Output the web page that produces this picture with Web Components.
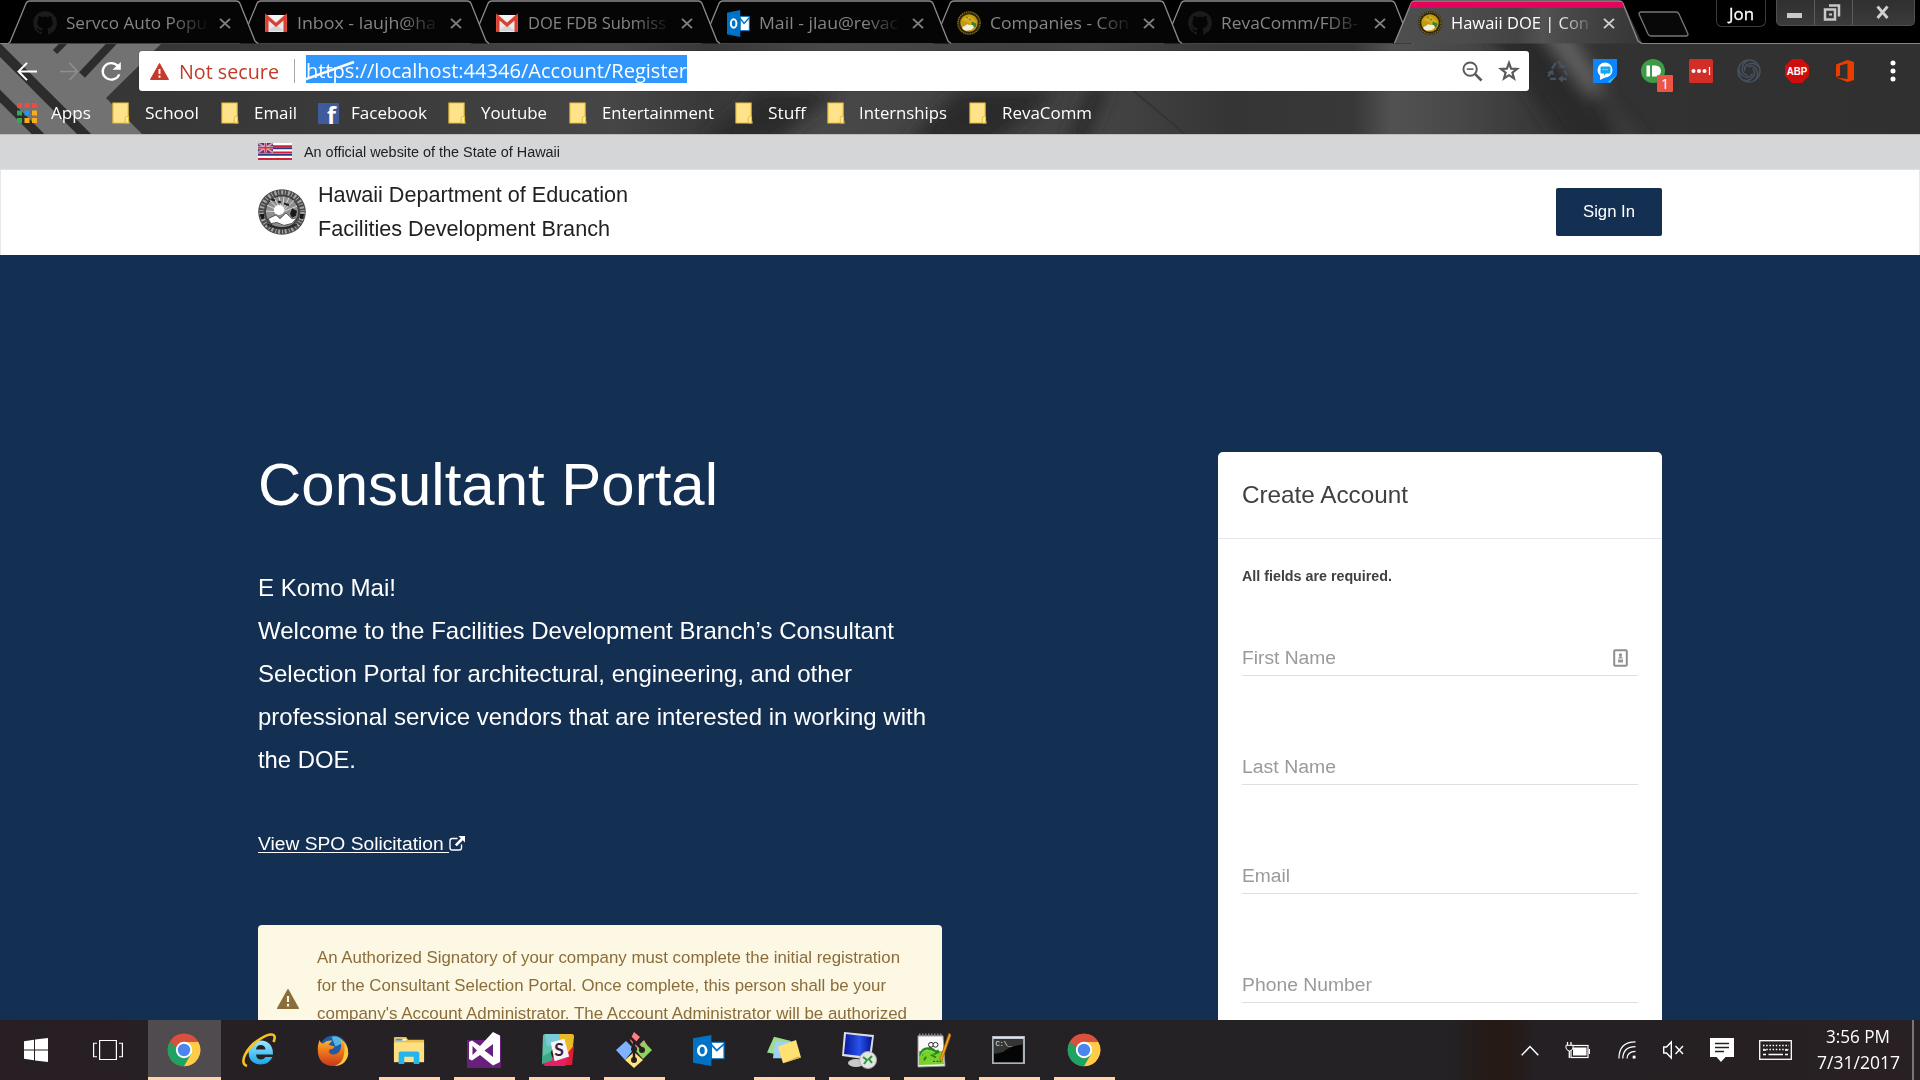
<!DOCTYPE html>
<html lang="en"><head><meta charset="utf-8"><title>Hawaii DOE | Consultant Portal</title>
<style>html,body{margin:0;padding:0;width:1920px;height:1080px;overflow:hidden;background:#132f52}</style></head>
<body><desktop-screen></desktop-screen>
<script>
const define=(name,html,init)=>{
  const t=document.createElement('template');t.innerHTML=html;
  customElements.define(name,class extends HTMLElement{
    connectedCallback(){
      if(this.shadowRoot)return;
      this.attachShadow({mode:'open'}).appendChild(t.content.cloneNode(true));
      if(init)init(this,this.shadowRoot);
    }
  });
};

/* ---------- icons ---------- */
const chromeLogo=`<circle cx="24" cy="24" r="23" fill="#dd5144"/><path d="M4.1 12.5A23 23 0 0 0 24 47L34 30 24 24 14 29.800Z" fill="#1da362"/><path d="M24 47A23 23 0 0 0 44 12.500H24L34 29.700Z" fill="#ffcd46"/><path d="M4.100 12.500A23 23 0 0 1 44 12.500H24L14 29.800Z" fill="#d9503f"/><path d="M4.100 12.500 14 29.800 24 24Z" fill="#1da362"/><path d="M4.100 12.500A23 23 0 0 1 44 12.500H24L13 20Z" fill="#d9503f"/><circle cx="24" cy="24" r="11.500" fill="#fff"/><circle cx="24" cy="24" r="8.800" fill="#4a86ee"/>`;
const github=`<path fill="#1c1a1b" d="M8 0a8 8 0 0 0-2.530 15.590c.4.070.550-.170.550-.380v-1.490c-2.010.370-2.530-.490-2.690-.940-.090-.230-.480-.940-.820-1.130-.280-.150-.680-.520-.010-.530.630-.010 1.080.580 1.230.820.720 1.210 1.870.870 2.330.660.070-.520.280-.870.510-1.070-1.780-.200-3.640-.890-3.640-3.950 0-.870.310-1.590.820-2.150-.080-.200-.360-1.020.080-2.120 0 0 .670-.210 2.200.820a7.600 7.600 0 0 1 4 0c1.530-1.040 2.200-.820 2.200-.820.440 1.100.160 1.920.080 2.120.510.560.820 1.270.820 2.150 0 3.070-1.870 3.750-3.650 3.950.290.250.540.730.540 1.480v2.200c0 .210.150.460.550.380A8 8 0 0 0 8 0Z"/>`;
const folder=`<path d="M1 1H17V17L18 22H1Z" fill="#ffe38a" stroke="#e9bf3a" stroke-width="1.200"/><path d="M14 22V17q0-2 2-2h1.500V22Z" fill="#ffe9a0" stroke="#e6b92c" stroke-width="1"/>`;
const outlook=`<path d="M0 4 19 0V38L0 34Z" fill="#0072c6"/><path d="M19 9H32V29H19Z" fill="#fff" stroke="#0072c6" stroke-width="1.300"/><path d="M19 12l5.500 7L32 11" fill="none" stroke="#0072c6" stroke-width="2"/><ellipse cx="9.500" cy="19" rx="4" ry="6" fill="none" stroke="#fff" stroke-width="2.800"/>`;
const ICONS={
 github:['0 0 16 16',github],
 gmail:['0 0 22 18',`<rect width="22" height="18" rx="1.500" fill="#e9e9e9"/><path d="M3 17 11 10l8 7Z" fill="#d4d4d4"/><path d="M1.800 18V2L11 10.500 20.200 2V18" fill="none" stroke="#d9402f" stroke-width="3.400"/><path d="M4 0H18L11 7Z" fill="#f4f4f4"/>`],
 outlook:['0 0 33 38',outlook],
 seal:['0 0 24 24',`<circle cx="12" cy="12" r="12" fill="#30280d"/><circle cx="12" cy="12" r="11" fill="none" stroke="#8b7420" stroke-width="1.200" stroke-dasharray="1.200 1"/><circle cx="12" cy="12" r="8.700" fill="#c49a10"/><path d="M5 9q4-5 9-3l5 5-3 5-4-4Z" fill="#d5ad20"/><path d="m9 6 2 1M12 8l2 1M15 11l4 2-1 3-3-1Z" fill="#39852b" stroke="#39852b"/><path d="M5 17q1-2 3-2 2-3 4-1 4-1 5 2-2 4-5 3-4 2-7-2Z" fill="#f2f0e2"/>`],
 sealgray:['0 0 48 48',`<circle cx="24" cy="24" r="23.800" fill="#4b4b4b"/><circle cx="24" cy="24" r="20.500" fill="none" stroke="#a6a6a6" stroke-width="4.500" stroke-dasharray="2 1.700 1 2.100"/><circle cx="24" cy="24" r="16.800" fill="#8f8f8f" stroke="#333" stroke-width="1"/><g stroke="#d9d9d9" stroke-width="1"><path d="M24 24 9 17M24 24 12 12M24 24 16 9M24 24 21 8M24 24 26 8M24 24 31 9M24 24 36 12M24 24 39 18M24 24 8 23"/></g><path d="M14 11l3 1M20 13l3 1M26 15l5 2" stroke="#222" stroke-width="2.200"/><circle cx="21" cy="22" r="5.200" fill="#fff"/><path d="M34 20l5 3-1 5-4 2-2-4Z" fill="#191919"/><path d="M10 31l8-4 4 4 6-6 6 6 5-1-5 6-8 2-7-3-6 1Z" fill="#fff" stroke="#555"/><path d="M2 26h4v5H3ZM42 26h4l-1 5h-3Z" fill="#161616"/><path d="M9 37q15 8 30 0" fill="none" stroke="#2a2a2a" stroke-width="2"/>`],
 x:['0 0 12 12','<path d="M1 1 11 11M11 1 1 11" stroke="currentColor" stroke-width="1.900"/>'],
 back:['0 0 20 20','<path d="M20 10H2M10 1 1.500 10 10 19" fill="none" stroke="currentColor" stroke-width="2"/>'],
 fwd:['0 0 20 20','<path d="M0 10H18M10 1 18.500 10 10 19" fill="none" stroke="currentColor" stroke-width="1.800"/>'],
 reload:['0 0 22 22','<path d="M18 5.500A8.600 8.600 0 1 0 19.300 14" fill="none" stroke="#fff" stroke-width="2.300"/><path d="M20.800 1V9.200H12.500Z" fill="#fff"/>'],
 warn:['0 0 20 17','<path d="M10 .5 19.500 16.500H.5Z" fill="currentColor" stroke="currentColor" stroke-linejoin="round"/><path d="M10 6v5M10 12.600v2.200" stroke="var(--mark,#fff)" stroke-width="2"/>'],
 zoomout:['0 0 22 22','<circle cx="8.500" cy="8.500" r="7" fill="none" stroke="#5a5a5a" stroke-width="2"/><path d="M13.500 13.500 20.500 20.500" stroke="#5a5a5a" stroke-width="2.800"/><path d="M5 8.500H12" stroke="#5a5a5a" stroke-width="1.600"/>'],
 star:['0 0 22 22','<path d="M11 3 13.100 8.600 19 8.900 14.400 12.600 16 18.500 11 15.200 6 18.500 7.600 12.600 3 8.900 8.900 8.600Z" fill="none" stroke="#5a5a5a" stroke-width="2.200"/>'],
 recycle:['0 0 24 24','<g fill="none" stroke="#46525f" stroke-width="2.600"><path d="M6.500 9.500 10 3.200"/><path d="M12 2.500h1.500L16 6.500"/><path d="M19.300 11.500 22 16.500"/><path d="M21.500 20.500H17"/><path d="M10.500 20.500H4.500"/><path d="M2.500 18 4.500 14"/></g><path d="M13 8l6 1.500 1-6ZM17.500 16.500v8l-5-4ZM1 13.500l6-2.800 1.500 6Z" fill="#46525f"/>'],
 bubble:['0 0 24 24','<path d="M0 0H24V16L17 24H0Z" fill="#0a84ff"/><path d="M24 16 17 24l-2-1.500Z" fill="#27c4ee"/><circle cx="12" cy="11" r="7.500" fill="#fff"/><path d="M7 15v6l6-3Z" fill="#fff"/><path d="M8.500 7.500h8q1 0 1 1v5q0 1-1 1H13l-2 2v-2H8.500q-1 0-1-1v-5q0-1 1-1Z" fill="#16a7ef"/><path d="M9.500 10.500h6" stroke="#9be0ff" stroke-dasharray="1.200 .8"/>'],
 push:['0 0 24 24','<circle cx="12" cy="12" r="12" fill="#3f9c46"/><path d="M5.500 6.500H9V17.500H5.500ZM11 6.500h3.500a5.500 5.500 0 0 1 0 11H11Z" fill="#fff"/>'],
 lastpass:['0 0 24 24','<rect width="24" height="24" rx="1.500" fill="#d32d27"/><circle cx="4.500" cy="12" r="2" fill="#fff"/><circle cx="10" cy="12" r="2" fill="#fff"/><circle cx="15.500" cy="12" r="2" fill="#fff"/><path d="M20.500 8v8" stroke="#fff" stroke-width="1.200"/>'],
 swirl:['0 0 24 24','<g fill="none" stroke="#46525f" stroke-width="1.500"><circle cx="12" cy="12" r="11"/>'+[0,72,144,216,288].map(a=>`<path transform="rotate(${a} 12 12)" d="M7.500 12Q7 4 16 4.500 20 5 21.500 8"/>`).join('')+'</g>'],
 abp:['0 0 24 24','<path d="M7 0H17L24 7V17L17 24H7L0 17V7Z" fill="#d00d0d"/><text x="12" y="16.300" font-family="Liberation Sans,sans-serif" font-weight="bold" font-size="11.500" textLength="20.500" lengthAdjust="spacingAndGlyphs" text-anchor="middle" fill="#fff">ABP</text>'],
 office:['0 0 18 22','<path d="M0 4.500 11.500 0 18 2V20l-6.500 2L0 17.500l11.500 1.400V3.600L4 5.500V15.500L0 17Z" fill="#eb3c00"/>'],
 dots:['0 0 6 22','<circle cx="3" cy="3" r="2.500" fill="#fff"/><circle cx="3" cy="11" r="2.500" fill="#fff"/><circle cx="3" cy="19" r="2.500" fill="#fff"/>'],
 apps:['0 0 20 20',['#f04b3e','#f04b3e','#f04b3e','#34a853','#2196f3','#fbad18','#34a853','#fbad18','#fbad18'].map((c,i)=>`<rect x="${i%3*7.500}" y="${(i/3|0)*7.500}" width="5" height="5" fill="${c}"/>`).join('')],
 folder:['0 0 19 23',folder],
 fb:['0 0 21 21','<rect width="21" height="21" rx="1" fill="#3f5c9a"/><text x="13.500" y="20.800" font-family="Open Sans,sans-serif" font-weight="bold" font-size="23" text-anchor="middle" fill="#fff">f</text>'],
 flag:['0 0 34 17','<rect width="34" height="17" fill="#fff"/><path d="M0 3.200H34M0 9.500H34M0 16H34" stroke="#cf2034" stroke-width="2.100"/><path d="M0 5.300H34M0 11.700H34" stroke="#2b3a86" stroke-width="2.100"/><rect width="15" height="9.500" fill="#31448d"/><path d="M0 0 15 9.500M15 0 0 9.500" stroke="#d99aae" stroke-width="1.800"/><path d="M7.500 0V9.500M0 4.750H15" stroke="#e9b6c0" stroke-width="3"/><path d="M7.500 0V9.500M0 4.750H15" stroke="#d0304a" stroke-width="1.600"/>'],
 ext:['0 0 16 15','<path d="M8.500 2.500H3.200Q1 2.500 1 4.700V11.800Q1 14 3.200 14H10.300Q12.500 14 12.500 11.800V8.500" fill="none" stroke="#fff" stroke-width="1.400"/><path d="M9.500 0H16V6.500L13.800 4.300 7.800 10.300 5.900 8.400 11.800 2.300Z" fill="#fff"/>'],
 contact:['0 0 15 18','<rect x="1.200" y="1.200" width="12.600" height="15.600" rx="1" fill="#fff" stroke="#8e8e8e" stroke-width="2"/><circle cx="7.500" cy="5.800" r="1.600" fill="#8e8e8e"/><path d="M5 9.500 7.500 6l2.500 3.500ZM5 10.500h5v3H5Z" fill="#999"/>'],
 win:['0 0 24 24','<path d="M0 3.300 10 1.700V11.400H0ZM11 1.600 24 0V11.400H11ZM0 12.600H10V22.300L0 20.800ZM11 12.600H24V24L11 22.400Z" fill="#fff"/>'],
 task:['0 0 30 24','<g fill="none" stroke="#fff" stroke-width="1.200"><path d="M6.600.6H23.400V23.400H6.600ZM4 4H.6V20H4M26 4h3.400V20H26"/></g>'],
 chrome:['0 0 48 48',chromeLogo],
 ie:['0 0 34 34','<defs><linearGradient id="g" x2="0" y2="1"><stop stop-color="#9be8ff"/><stop offset="1" stop-color="#18a6ea"/></linearGradient></defs><path d="M30.500 24Q27 31.500 18.500 31.500 7 31 6.500 19.500 7 8 18.500 7.500 31 8 31 21.500H14Q14.500 26.500 19 26.500 22 26.500 23.500 24ZM14 16.500H23.500Q23 12 18.800 12 14.500 12 14 16.500Z" fill="url(#g)"/><path d="M5 33C-4 30 5 14 18 6 27 0 36-1 31.500 9" fill="none" stroke="#f7c21c" stroke-width="2.600"/>'],
 ff:['0 0 34 34','<defs><linearGradient id="g" x2="0" y2="1"><stop stop-color="#f8c430"/><stop offset=".45" stop-color="#ef7a1c"/><stop offset="1" stop-color="#c8371a"/></linearGradient></defs><circle cx="17" cy="16" r="14.500" fill="#1e5ba8"/><path d="M15 3q8-3 12 6l-8 4Z" fill="#55b6e4"/><path d="M3 6q0 3 3 4 4-4 10-3-3 2-4 4l6 2q-1 3-5 3-2 3 2 5 9 1 10-9 0-6-2-8 10 6 9 17-2 11-14 12Q3 33 1 20 0 11 3 6Z" fill="url(#g)"/><path d="M27 7q8 9 4 18-4 8-13 8 9-3 10-13 1-8-1-13Z" fill="#f9c93c"/>'],
 explorer:['0 0 34 30','<path d="M1 1q0-1 1-1H14l2 3H33V26H1Z" fill="#ebc04e"/><path d="M3 3h11" stroke="#fff" stroke-width="2"/><path d="M3 3h7" stroke="#2b9be0" stroke-width="2"/><path d="M1 6H33V28H1Z" fill="#fedf82"/><path d="M6 30V18q0-2 2-2H26q2 0 2 2V30H22V22H12V30Z" fill="#22b5f0"/>'],
 vs:['0 0 34 36','<path d="M0 8H25V0L34 4V36H0Z" fill="#68217a"/><path d="M26 0 33 3.500V30L26 33.500 13 23 5 28.500 2 27V10L5 8.500 13 14ZM5.500 14v9L10 18.500ZM17.500 18.500 26 25V12Z" fill="#fff" fill-rule="evenodd"/>'],
 slack:['0 0 34 34','<path d="M1 2q0-2 2-2L20 0 8 21 0 33Z" fill="#5bc4aa"/><path d="M3 0H18L20 10 5 13Z" fill="#78cbd7"/><path d="M18 0H31q2 0 2 3l-2 18-8 4-5-16Z" fill="#e9b927"/><path d="M33 12 31 33H22l3-11Z" fill="#df1b35"/><path d="M2 30 13 23h15l-4 11H4Q1 34 2 30Z" fill="#e61e66"/><path d="M0 24v8l11-4-2-9Z" fill="#39aa82"/><path d="M9 9 23 5l5 19-15 5Z" fill="#f6f4f4"/><text x="17.500" y="23.500" font-family="Lato,sans-serif" font-weight="bold" font-size="18" text-anchor="middle" fill="#381f3f">S</text>'],
 git:['0 0 36 36','<path d="M18 0 24 5 19 11 22 14 28 8 31 13 26 18 20 17 14 8Z" fill="#ff7f86"/><path d="M10 9 18 17 9 28 0 18Z" fill="#80b3ff"/><path d="M27 9 36 18 27 27 20 19Z" fill="#8dd35f"/><path d="M18 20 27 28 18 36 9 28Z" fill="#ffe680"/><path d="M10 1 27 18M18 8V28" stroke="#251f22" stroke-width="2.500"/><circle cx="18" cy="17" r="3" fill="#251f22"/><circle cx="18" cy="28" r="3" fill="#251f22"/><circle cx="26" cy="18" r="3" fill="#251f22"/>'],
 sticky:['0 0 34 34','<path d="M7 1 24 6 17 24 0 20Z" fill="#9ddb8d"/><path d="M8 7 26 7 25 27 6 27Z" fill="#9fd1f5"/><path d="M11 13 29 5 34 26 16 33Z" fill="#ffe173"/><path d="M16 33 34 26 31 25Z" fill="#d5b23e"/>'],
 rdp:['0 0 34 36','<defs><linearGradient id="g"><stop stop-color="#0717a2"/><stop offset=".55" stop-color="#2853e8"/><stop offset="1" stop-color="#06148c"/></linearGradient></defs><ellipse cx="14" cy="31" rx="8" ry="4" fill="#c9c9c9"/><path d="M2 0 32 3 29 28 0 24Z" fill="#ddd"/><path d="M4 2 30 5 27 25 2 22Z" fill="url(#g)"/><circle cx="26" cy="28" r="8.500" fill="#e4e4e4" stroke="#aaa"/><path d="M21 25l4 3-3 4M30 24l-3 3 3 4" fill="none" stroke="#259b35" stroke-width="2"/>'],
 npp:['0 0 34 36','<path d="M1 3H26L28 35 1 36Z" fill="#fafafa" stroke="#999"/><path d="M2 2H26" stroke="#888" stroke-width="3" stroke-dasharray="1.500 1.500"/><path d="M2 19H26l1 14L2 34Z" fill="#78cf2d"/><path d="M4 24q1-8 8-7 5 0 6 4l4-2" fill="none" stroke="#2b8216" stroke-width="3.500"/><path d="M4 24q2-6 8-6l6 3" fill="none" stroke="#7be04a" stroke-width="1.500"/><path d="M9 25l-2 4M14 23l5 3M12 18l2-5" fill="none" stroke="#2b8216" stroke-width="2"/><circle cx="14" cy="12.500" r="2.500" fill="#fff" stroke="#222"/><circle cx="18.500" cy="12.500" r="2.500" fill="#fff" stroke="#222"/><path d="M32 0 34 2 25 29 23 31 23 27Z" fill="#f2a01d" stroke="#9d5a0c" stroke-width=".7"/><path d="M16 30h8" stroke="#174b12" stroke-dasharray="2 1.500"/>'],
 cmd:['0 0 34 30','<rect width="34" height="30" fill="#a9b1b8"/><path d="M1 1.800H33" stroke="#dfe4e8" stroke-width="2"/><rect x="1.800" y="3.500" width="30" height="24.700" fill="#050505"/><path d="M2 4H32V9Q17 11 12 17 6 19 2 19Z" fill="#353535"/><text x="3.500" y="11" font-family="Liberation Mono,monospace" font-size="7.500" textLength="17" fill="#eee">C:\\_</text>'],
 caret:['0 0 18 11','<path d="M.7 10.300 9 1.500l8.300 8.800" fill="none" stroke="#fff" stroke-width="1.500"/>'],
 battery:['0 0 24 16','<rect x="5" y="3.500" width="17" height="12" fill="none" stroke="#fff" stroke-width="1.200"/><rect x="7" y="5.500" width="13.500" height="8" fill="#fff"/><path d="M23.300 7v5M1.500 0v3M5 0v3M3.300 8v8" stroke="#fff" stroke-width="1.300"/><path d="M0 3.300h7V6q-1 3-3.500 3T0 6Z" fill="#252023" stroke="#fff"/>'],
 wifi:['0 0 19 19','<g fill="none" stroke="#fff" stroke-width="1.300"><path d="M1 18.500Q1 1 18.500 1"/><path d="M5 18.500Q5.500 6 18.500 6"/><path d="M9.500 18.500Q10 11 18.500 11"/></g><rect x="15.500" y="15.500" width="3" height="3" fill="#fff"/>'],
 mute:['0 0 21 18','<path d="M.7 6H3.500L8.300.9V17.100L3.500 12H.7ZM12.500 5l7.500 8M20 5l-7.500 8" fill="none" stroke="#fff" stroke-width="1.400"/>'],
 msg:['0 0 24 24','<path d="M0 0H24V19H15.500L11 24 6.500 19H0Z" fill="#fff"/><path d="M5 5.500H19M5 9.500H19M5 13.500H14" stroke="#252023" stroke-width="1.300"/>'],
 kbd:['0 0 33 20','<rect x=".7" y=".7" width="31.600" height="18.600" fill="none" stroke="#fff" stroke-width="1.300"/><path d="M4 5.500H30M4 9.500H30" stroke="#fff" stroke-width="1.400" stroke-dasharray="1.500 1.700"/><path d="M4 14.500H7M9.500 14.500H24M26 14.500h3M4 10h3M26 10h3" stroke="#fff" stroke-width="1.300"/>']
};
define('ui-icon','<style>:host{display:block;flex:none}svg{display:block;width:100%;height:100%;overflow:visible}</style>',(h,r)=>{
  const [vb,body]=ICONS[h.getAttribute('name')];
  h.style.width=h.getAttribute('w')+'px';h.style.height=h.getAttribute('h')+'px';
  r.innerHTML+=`<svg viewBox="${vb}" preserveAspectRatio="none">${body}</svg>`;
});

/* One line of text condensed or expanded to a set width */
define('fit-text','<style>:host{display:block;flex:none;white-space:nowrap}span{display:inline-block;transform-origin:0 50%;vertical-align:top;text-decoration:var(--line,none);text-underline-offset:2px;text-decoration-thickness:1px}</style><span><slot></slot></span>',(h,r)=>{
  const s=r.querySelector('span'),w=+h.getAttribute('w');
  h.style.width=w+'px';
  s.style.transform=`scaleX(${w/s.getBoundingClientRect().width})`;
});

/* ---------- browser ---------- */
define('theme-art',`<style>:host{display:block;position:absolute;inset:0;z-index:-1}svg{display:block}</style>
<svg width="1920" height="134"><defs>
<linearGradient id="a"><stop stop-color="#343434"/><stop offset=".2" stop-color="#3b3b3b"/><stop offset=".32" stop-color="#464646"/><stop offset=".37" stop-color="#383838"/><stop offset=".43" stop-color="#484848"/><stop offset=".53" stop-color="#404040"/><stop offset=".57" stop-color="#454545"/><stop offset=".64" stop-color="#353535"/><stop offset=".705" stop-color="#383838"/><stop offset=".725" stop-color="#525252"/><stop offset=".76" stop-color="#484848"/><stop offset=".8" stop-color="#383838"/><stop offset=".84" stop-color="#323232"/><stop offset="1" stop-color="#303030"/></linearGradient>
<filter id="b" filterUnits="userSpaceOnUse" x="0" y="-40" width="1920" height="220"><feGaussianBlur stdDeviation="8"/></filter></defs>
<rect width="1920" height="134" fill="url(#a)"/>
<g filter="url(#b)"><path d="M700 144 760 90 840 90 770 144ZM905 144 960 90 1060 90 990 144Z" fill="#2a2a2a"/><path d="M1065 144 1090 85 1110 85 1085 144Z" fill="#292929"/><path d="M1480 20h50l110 130h-70Z" fill="#292929"/><path d="M1532 20h30l44 70-16 6Z" fill="#606060"/><path d="M1590 80 1650 150h-24Z" fill="#3c3c3c"/></g>
<path d="M1130 88 1185 134" stroke="#343434" stroke-width="2"/>
<path d="M0 44H161L106 98 142 134H0Z" fill="#727272"/>
<g stroke="#2c2c2c" fill="none"><path d="M-6 44 88 138" stroke-width="10"/><path d="M-4 92 42 138" stroke-width="9"/><path d="M114 41 82 75" stroke-width="8"/><path d="M66 41 55 52" stroke-width="6"/></g>
<path d="M0 0H1920V43H1642L1623 2H1413L1393 43H0Z" fill="#000"/><path d="M0 43.500H1393M1642 43.500H1920" stroke="#848484"/></svg>`);
define('browser-tab',`<style>:host{display:flex;position:relative;box-sizing:border-box;width:231px;height:44px;flex:none;padding:2px 0 0 25px;align-items:center;color:#858585}
:host([active]){color:#fff;z-index:20!important;padding-left:24px}
.bg{position:absolute;left:0;top:0;z-index:-1}.ic{width:24px;display:flex;justify-content:center;margin-right:9px}
.t{width:142px;overflow:hidden;font:17px/24px "Open Sans",sans-serif;margin-right:11px;padding-bottom:1px;-webkit-mask:linear-gradient(90deg,#000 74%,transparent 101%)}
:host([active]) .t{margin-right:10px}
ui-icon.x{color:#808080}:host([active]) ui-icon.x{color:#d0d0d0}</style>
<svg class="bg" width="251" height="44"></svg><div class="ic"></div><div class="t"><slot></slot></div><ui-icon class="x" name="x" w="12" h="11"></ui-icon>`,(h,r)=>{
  const on=h.hasAttribute('active'),p='M0,43.500L2,42L18,3.500Q19,1 22,1H228Q231,1 232,3.500L247,41L250,43.500';
  const q=on?'M-1,43.500L1,42L17,3.500Q18,1 21,1H225Q228,1 229,3.500L244,41L248,43.500':p;
  r.querySelector('svg').innerHTML='<defs><linearGradient id="f"><stop stop-color="#4e4e4e"/><stop offset=".3" stop-color="#4c4c4c"/><stop offset=".5" stop-color="#434343"/><stop offset=".6" stop-color="#525252"/><stop offset=".7" stop-color="#484848"/><stop offset="1" stop-color="#363636"/></linearGradient></defs>'+`<path d="${q}" fill="${on?'url(#f)':'#050505'}" stroke="#8b8b8b" stroke-width="1.300"/>`+(on?'<path d="M18 2H228l2 6H15.500Z" fill="#e5045c"/>':'');
  r.querySelector('.ic').innerHTML=`<ui-icon name="${h.getAttribute('icon')}" w="${h.getAttribute('iw')}" h="${h.getAttribute('ih')}"></ui-icon>`;
});
define('tab-strip',`<style>:host{display:flex;height:44px;padding-left:8px;align-items:flex-start}
.new{margin:11px 0 0 13px}.jon{margin:0 0 0 26px;width:48px;height:26px;border:1px solid #3b3b3b;border-top:0;border-radius:0 0 6px 6px;display:flex;justify-content:center;font:17px/27px "Open Sans",sans-serif;color:#fff;-webkit-text-stroke:.3px #fff}
.win{display:flex;margin-left:10px;border:1px solid #4f4f4f;border-top:0;border-radius:0 0 5px 5px;background:linear-gradient(#303030,#3b3b3b);overflow:hidden}
.win svg{display:block;border-right:1px solid #5c5c5c}.win svg:last-child{border:0}</style>
<browser-tab style="z-index:9" icon="github" iw="24" ih="24"><fit-text w="141">Servco Auto Popu</fit-text></browser-tab>
<browser-tab style="z-index:8" icon="gmail" iw="22" ih="17"><fit-text w="139">Inbox - laujh@ha</fit-text></browser-tab>
<browser-tab style="z-index:7" icon="gmail" iw="22" ih="17"><fit-text w="138">DOE FDB Submiss</fit-text></browser-tab>
<browser-tab style="z-index:6" icon="outlook" iw="23" ih="27"><fit-text w="139">Mail - jlau@revac</fit-text></browser-tab>
<browser-tab style="z-index:5" icon="seal" iw="24" ih="24"><fit-text w="139">Companies - Con</fit-text></browser-tab>
<browser-tab style="z-index:4" icon="github" iw="24" ih="24"><fit-text w="137">RevaComm/FDB-</fit-text></browser-tab>
<browser-tab active icon="seal" iw="24" ih="24"><fit-text w="138">Hawaii DOE | Con</fit-text></browser-tab>
<svg class="new" width="52" height="26"><path d="M3 1H38Q40 1 41 3L50 23Q50 25 48 25H13Q11 25 10 23L1 3Q1 1 3 1Z" fill="#080808" stroke="#777" stroke-width="1.300"/></svg>
<div class="jon"><fit-text w="25">Jon</fit-text></div>
<div class="win"><svg width="37" height="25"><path d="M10 15.500H25" stroke="#c9c9c9" stroke-width="5"/></svg><svg width="37" height="25"><path d="M14 5.500h10v11M10 9.500h10v10H10Z" fill="none" stroke="#c9c9c9" stroke-width="2.500"/><path d="M14 14.500h3" stroke="#c9c9c9" stroke-width="2"/></svg><svg width="61" height="25"><path d="M24.500 6.500 34.500 18M34.500 6.500 24.500 18" stroke="#d0d0d0" stroke-width="2.800"/></svg></div>`);
define('omni-bar',`<style>:host{display:flex;height:40px;width:1390px;background:#fff;border-radius:3px;box-sizing:border-box;align-items:center;padding:0 9px 0 11px;font:20px/40px "Open Sans",sans-serif;box-shadow:0 0 1px #111}
.w{color:#c53929;margin-right:9px}.ns{color:#c53929;padding-top:1px}.d{width:1px;height:24px;background:#a9a9a9;margin:0 11px 0 15px}
.sel{position:relative;background:#3297fd;color:#fff;height:28px;line-height:31px;margin-top:-4px}.sel svg{position:absolute;left:0;top:0}.sp{flex:1}.z{margin-right:15px}</style>
<ui-icon class="w" name="warn" w="19" h="17"></ui-icon><fit-text class="ns" w="100" style="margin-left:1px">Not secure</fit-text><div class="d"></div>
<div class="sel"><fit-text w="381">https://localhost:44346/Account/Register</fit-text><svg width="50" height="28"><path d="M0 24 48 7" stroke="#fff" stroke-width="2.500"/></svg></div><div class="sp"></div>
<ui-icon class="z" name="zoomout" w="21" h="21"></ui-icon><ui-icon name="star" w="22" h="22"></ui-icon>`);
define('tool-bar',`<style>:host{display:flex;height:54px;box-sizing:border-box;padding:7px 0 7px 17px;align-items:center;color:#fff}
.b{margin-right:23px}.f{color:#8e8e8e;margin-right:21px}.r{margin-right:17px}.e{margin-left:24px;position:relative}.e b{position:absolute;left:16px;top:16px;width:16px;height:17px;background:#ea5545;color:#fff;font:14px/17px "Open Sans",sans-serif;text-align:center;border-radius:1px}.o{margin-left:27px}.k{margin-left:36px}</style>
<ui-icon class="b" name="back" w="20" h="19"></ui-icon><ui-icon class="f" name="fwd" w="19" h="19"></ui-icon><ui-icon class="r" name="reload" w="22" h="21"></ui-icon><omni-bar></omni-bar>
<ui-icon style="margin-left:17px" name="recycle" w="23" h="22"></ui-icon><div class="e"><ui-icon name="bubble" w="24" h="24"></ui-icon></div><div class="e"><ui-icon name="push" w="24" h="24"></ui-icon><b>1</b></div><div class="e"><ui-icon name="lastpass" w="24" h="24"></ui-icon></div><div class="e"><ui-icon name="swirl" w="24" h="24"></ui-icon></div><div class="e"><ui-icon name="abp" w="24" h="24"></ui-icon></div><ui-icon class="o" name="office" w="18" h="22"></ui-icon><ui-icon class="k" name="dots" w="6" h="22"></ui-icon>`);
const marks=[['apps',20,14,40,'Apps'],['folder',18,15,54,'School'],['folder',18,15,43,'Email'],['fb',21,12,76,'Facebook'],['folder',18,15,66,'Youtube'],['folder',18,15,112,'Entertainment'],['folder',18,15,38,'Stuff'],['folder',18,14,88,'Internships'],['folder',18,15,90,'RevaComm']];
define('bookmark-bar',`<style>:host{display:flex;height:36px;box-sizing:border-box;padding:0 0 6px 17px;align-items:center;gap:21.35px;color:#fff;font:17px/30px "Open Sans",sans-serif}.m{display:flex;align-items:center}fit-text{margin-top:0;padding-bottom:1px}</style>`+marks.map(m=>`<div class="m"><ui-icon name="${m[0]}" w="${m[1]}" h="${m[0]=='folder'?22:m[0]=='fb'?21:20}" style="margin-right:${m[2]}px"></ui-icon><fit-text w="${m[3]}">${m[4]}</fit-text></div>`).join(''));
define('browser-chrome',`<style>:host{display:block;position:relative;height:134px;z-index:0;flex:none}</style><theme-art></theme-art><tab-strip></tab-strip><tool-bar></tool-bar><bookmark-bar></bookmark-bar>`);

/* ---------- page ---------- */
define('official-banner',`<style>:host{display:flex;height:36px;box-sizing:border-box;background:#d5d6d8;border-top:1px solid #bdbdbd;border-bottom:1px solid #e2e2e2;align-items:center;padding:0 0 1px 258px;gap:11.5px;font:14px/34px "Liberation Sans",Arial,sans-serif;color:#212121}fit-text{margin-top:1px}</style><ui-icon name="flag" w="34" h="17"></ui-icon><fit-text w="256">An official website of the State of Hawaii</fit-text>`);
define('site-header',`<style>:host{display:flex;height:85px;box-sizing:border-box;background:#fff;border:1px solid #e8e8ea;border-top:0;border-bottom:0;align-items:center;padding:0 257px 2px;font:22.4px/34px "Liberation Sans",Arial,sans-serif;color:#212121}
.n{margin-left:12px;flex:1}.btn{width:106px;height:48px;border-radius:2px;background:#132f52;color:#fff;display:flex;justify-content:center;font-size:16.500px;line-height:47px}</style>
<ui-icon name="sealgray" w="48" h="46"></ui-icon><div class="n"><fit-text w="310">Hawaii Department of Education</fit-text><fit-text w="292">Facilities Development Branch</fit-text></div><div class="btn"><fit-text w="52">Sign In</fit-text></div>`);
define('alert-box',`<style>:host{display:flex;box-sizing:border-box;width:684px;height:150px;background:#fcf8e3;border-radius:4px;color:#8a6d3b;font:16.800px/28px "Liberation Sans",Arial,sans-serif;padding:19px 0 0 19px}ui-icon{margin:45px 18px 0 0;--mark:#fcf8e3}</style><ui-icon name="warn" w="22" h="20"></ui-icon><div><slot></slot></div>`);
define('portal-intro',`<style>:host{display:block;width:700px;color:#fff;font-family:"Liberation Sans",Arial,sans-serif}
h1{margin:0;font:60px/66px "Liberation Sans",Arial,sans-serif}.p{font-size:24px;line-height:43px;margin-top:48px}.a{display:flex;margin-top:51px;font-size:19.200px;line-height:24px;--line:underline}.a ui-icon{margin-top:4px}alert-box{margin-top:69px}</style>
<h1><fit-text w="460">Consultant Portal</fit-text></h1>
<div class="p"><fit-text w="138">E Komo Mai!</fit-text><fit-text w="636">Welcome to the Facilities Development Branch’s Consultant</fit-text><fit-text w="594">Selection Portal for architectural, engineering, and other</fit-text><fit-text w="668">professional service vendors that are interested in working with</fit-text><fit-text w="98">the DOE.</fit-text></div>
<div class="a"><fit-text w="191">View SPO Solicitation&nbsp;</fit-text><ui-icon name="ext" w="16" h="15"></ui-icon></div>
<alert-box><fit-text w="583">An Authorized Signatory of your company must complete the initial registration</fit-text><fit-text w="569">for the Consultant Selection Portal. Once complete, this person shall be your</fit-text><fit-text w="590">company's Account Administrator. The Account Administrator will be authorized</fit-text></alert-box>`);
define('form-field',`<style>:host{display:flex;height:109px;box-sizing:border-box;border-bottom:1px solid #dedfe2;align-items:flex-end;justify-content:space-between;color:#9a9a9a;font:19.200px/24px "Liberation Sans",Arial,sans-serif;padding:0 10px 5px 0}</style><slot></slot><slot name="icon"></slot>`);
define('account-card',`<style>:host{display:block;width:444px;height:700px;background:#fff;border-radius:5px;color:#404040;font-family:"Liberation Sans",Arial,sans-serif}
.h{height:87px;box-sizing:border-box;border-bottom:1px solid #e6e7ef;padding:0 24px;font-size:24px;line-height:85px}.b{padding:0 24px}.q{font:bold 14px/20px "Liberation Sans",Arial,sans-serif;padding-top:27px;height:0;margin-bottom:1px}</style>
<div class="h"><fit-text w="166">Create Account</fit-text></div><div class="b"><div class="q"><fit-text w="150">All fields are required.</fit-text></div>
<form-field><fit-text w="94">First Name</fit-text><ui-icon slot="icon" name="contact" w="15" h="18" style="margin-bottom:3px"></ui-icon></form-field><form-field><fit-text w="94">Last Name</fit-text></form-field><form-field><fit-text w="48">Email</fit-text></form-field><form-field><fit-text w="130">Phone Number</fit-text></form-field></div>`);
define('portal-main',`<style>:host{display:flex;flex:1;min-height:0;overflow:hidden;background:#132f52;padding:197px 258px 0;justify-content:space-between;align-items:flex-start}</style><portal-intro></portal-intro><account-card></account-card>`);

/* ---------- taskbar ---------- */
define('task-item',`<style>:host{display:flex;position:relative;box-sizing:border-box;width:75px;height:60px;align-items:center;justify-content:center;flex:none;padding-right:2px}:host([run])::after{content:"";position:absolute;left:7px;right:7px;bottom:0;height:3px;background:#ffd6a9}:host([on]){background:#504b4e;width:73px;margin-right:1px}:host([on])::after{left:0;right:0}</style><slot></slot>`);
const apps=[['ie',34,34,''],['ff',33,33,''],['explorer',32,27,'run'],['vs',34,36,'run'],['slack',33,32,'run'],['git',36,36,'run'],['outlook',32,31,''],['sticky',34,28,'run'],['rdp',34,36,'run'],['npp',34,34,'run'],['cmd',33,28,'run'],['chrome',34,34,'run']];
define('task-bar',`<style>:host{display:flex;height:60px;background:linear-gradient(90deg,#281e23,#252124 20%,#242224 75.500%,#251a16 77.500%,#251a16 78.500%,#242023 80%,#292023);position:relative;align-items:center;color:#fff;flex:none}
.s{width:72px;display:flex;justify-content:center}.sp{flex:1}.c{font:18px/26px "Open Sans",sans-serif;width:82px;display:flex;flex-direction:column;align-items:center;margin-right:13px;padding-bottom:3px}.l{width:2px;height:60px;background:#777;margin-right:6px}</style>
<div class="s"><ui-icon name="win" w="24" h="24"></ui-icon></div><div class="s" style="width:72px;margin-right:4px"><ui-icon name="task" w="30" h="20"></ui-icon></div>
<task-item on run><ui-icon name="chrome" w="34" h="34"></ui-icon></task-item>`+apps.map(a=>`<task-item ${a[3]}><ui-icon name="${a[0]}" w="${a[1]}" h="${a[2]}"></ui-icon></task-item>`).join('')+`<div class="sp"></div>
<ui-icon name="caret" w="18" h="11" style="margin-right:27px"></ui-icon><ui-icon name="battery" w="24" h="16" style="margin-right:28px"></ui-icon><ui-icon name="wifi" w="18" h="18" style="margin-right:27px"></ui-icon><ui-icon name="mute" w="21" h="18" style="margin-right:26px"></ui-icon><ui-icon name="msg" w="24" h="24" style="margin-right:25px"></ui-icon><ui-icon name="kbd" w="33" h="20" style="margin-right:25px"></ui-icon>
<div class="c"><fit-text w="64">3:56 PM</fit-text><fit-text w="83">7/31/2017</fit-text></div><div class="l"></div>`);
define('desktop-screen',`<style>:host{display:flex;flex-direction:column;width:1920px;height:1080px;overflow:hidden}</style><browser-chrome></browser-chrome><official-banner></official-banner><site-header></site-header><portal-main></portal-main><task-bar></task-bar>`);
</script></body></html>
